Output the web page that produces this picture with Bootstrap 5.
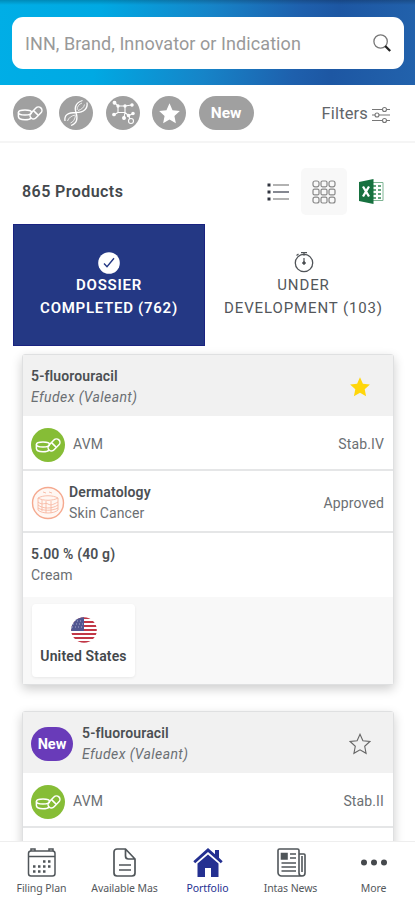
<!DOCTYPE html>
<html lang="en">
<head>
<meta charset="utf-8">
<meta name="viewport" content="width=device-width, initial-scale=1">
<title>Portfolio</title>
<link rel="stylesheet" href="https://cdn.jsdelivr.net/npm/bootstrap@5.3.0/dist/css/bootstrap.min.css">
<style>
body{font-family:Roboto,"Liberation Sans",sans-serif;font-size:14px;line-height:21px;color:#6b6f73;letter-spacing:.13px;background:#fff}
svg{display:block;flex:none}
.app{height:900px}
.top-bar{height:85px;padding:17px 11px 16px 12px;background:linear-gradient(#0003,#0000 5px),linear-gradient(97deg,#00aee6 0,#00a9e3 24%,#1684c8 50%,#1e60ad 71%,#1d57a3 80%,#2262ac 100%)}
.search-box{height:52px;border-radius:11px;padding:0 12px 0 13px;font-size:18px;color:#999;letter-spacing:.08px}
.chip-bar{height:58px;padding:2px 25px 2px 13px;border-bottom:2px solid #f5f5f5}
.chip{width:34px;height:34px;background:#a0a0a0;color:#fff;margin-right:12.4px}
.chip-new{width:55px;height:34px;border-radius:17px;background:#a0a0a0;font-size:15.5px;letter-spacing:0}
.filters{font-size:16.5px;color:#62666a;letter-spacing:.15px}
.tool-bar{height:47px;margin-top:25px;padding:0 31px 0 22px}
.total{font-size:16px;color:#44484c;letter-spacing:.43px}
.grid-btn{width:46px;height:47px;border-radius:5px;background:#f8f8f8;margin:0 12px}
.tabs-row{margin:9px 13px 0;height:122px}
.tab-cell{font-size:15px;line-height:23px;letter-spacing:.88px;padding-top:2px;color:#53575b}
.tab-on{flex:0 0 192px;background:#243884;border:1px solid #1a2380;color:#fff;font-weight:600;letter-spacing:.72px}
.product{width:372px;border:1px solid #dfe0e1;border-radius:3px;box-shadow:0 4px 11px #00000033;margin-left:22px}
.p-head{height:61px;background:#f1f1f1;padding:3px 22px 0 8px}
.p-name{font-weight:600;color:#4c5054}
.p-row{padding:4px 9px 0 8px;border-bottom:2px solid #e5e6e7}
.row-a{height:55px}.row-b{height:62px}
.row-c{height:64px;padding:0 8px}
.brand{font-style:italic;letter-spacing:.4px}
.pill{width:42px;height:34px;border-radius:17px;background:#693bb9;font-size:14.5px;letter-spacing:0;margin-right:9px}
.green{width:34px;height:34px;background:#86bd36;color:#fff;margin-right:8px}
.p-foot{height:87px;background:#f8f8f8;padding:7px 9px}
.country{width:103px;height:73px;border-radius:4px;box-shadow:0 1px 3px #0001;color:#44484c;font-weight:600;letter-spacing:.15px;padding-top:2px}
.country svg{margin-bottom:3px}
.feed{padding-top:8px}
.second{margin-top:26px;height:150px}
.bottom-nav{height:59px;border-top:1px solid #eee;background:#fff;font-family:"Noto Sans",sans-serif;font-size:10.5px;line-height:14px;color:#54585c;letter-spacing:-.08px;padding-top:5px}
.bottom-nav>div{width:83px}
.bottom-nav svg{margin-bottom:3px}
.bottom-nav .nav-on{color:#243091}
</style>
</head>
<body>
<svg width="0" height="0" class="position-absolute">
<defs>
<symbol id="pills" viewBox="0 0 34 34"><g fill="none" stroke="currentColor" stroke-width="1.5"><ellipse cx="12" cy="16.5" rx="6.6" ry="2.5"/><path d="M5.400 16.500v4c0 2 3 3.200 6.600 3.200 2.700 0 5.200-.7 6.200-1.800"/><rect x="16" y="13.400" width="14" height="7" rx="3.500" transform="rotate(-46 23 16.900)"/><path d="m20.500 14.600 4.600 4.500"/></g></symbol>
<symbol id="star" viewBox="0 0 22 22"><path d="m11 1.300 2.900 6.500 7 .7-5.200 4.800 1.400 7-6.100-3.500-6.100 3.500 1.400-7L1.100 8.500l7-.7z"/></symbol>
</defs>
</svg>
<div class="app d-flex flex-column overflow-hidden">
<header class="top-bar flex-shrink-0">
<div class="search-box bg-white d-flex align-items-center justify-content-between"><span>INN, Brand, Innovator or Indication</span>
<svg width="20" height="20" viewBox="0 0 20 20" fill="none"><circle cx="8.600" cy="8.500" r="6.700" stroke="#777" stroke-width="1.300"/><path d="m13.200 13 5 5" stroke="#222" stroke-width="2.300"/></svg></div>
</header>
<section class="chip-bar d-flex align-items-center flex-shrink-0">
<span class="chip rounded-circle"><svg width="34" height="34"><use href="#pills"/></svg></span>
<span class="chip rounded-circle"><svg width="34" height="34" viewBox="0 0 34 34" fill="none" stroke="#fff" stroke-width="1.300"><path d="M6 25c-1-6 3-8.500 11-8.500 8 0 12-4 11-10M12 29.500c6-2 7-7 5-13-2-5 0-10 6.500-12"/><path d="M8.500 25c1-3 4-5.500 8-6M11.500 27c3-1 4.500-4 5-7.500M18 14c0-4 2.500-6 5-7M19 14.500c3.500-1 6-3 6.500-6" stroke-width=".8"/></svg></span>
<span class="chip rounded-circle"><svg width="34" height="34" viewBox="0 0 34 34" fill="#fff" stroke="#fff" stroke-width="1.100"><path fill="none" d="M12 10h7v6.500h-7zM9 7l3 3M19 10l6.500-1M19 16.500l3.500 3 5-2M22.500 19.500l1.500 3.500M12 16.500l-3.500 2M19 16.500l-1 5"/><circle cx="8.500" cy="6.800" r="1.400"/><circle cx="26" cy="9" r="1.200"/><circle cx="12" cy="10" r="1.100"/><circle cx="19" cy="10" r="1.100"/><circle cx="8" cy="18.500" r="1.300"/><circle cx="18" cy="22" r="1.400"/><circle cx="27" cy="17.500" r="1.200"/><circle cx="22.500" cy="19.500" r="1.200"/><circle fill="none" cx="25" cy="25" r="2.500"/></svg></span>
<span class="chip rounded-circle d-flex align-items-center justify-content-center"><svg width="23" height="23" fill="currentColor"><use href="#star"/></svg></span>
<span class="chip-new text-white fw-bold d-flex align-items-center justify-content-center">New</span>
<span class="filters ms-auto d-flex align-items-center">Filters<svg class="ms-1 mt-1" width="18" height="18" viewBox="0 0 18 18" fill="#fff" stroke="#777" stroke-width="1.100"><path d="M0 3.500h18M0 9h18M0 14.500h18"/><circle cx="12.500" cy="3.500" r="2"/><circle cx="5" cy="9" r="2"/><circle cx="12.500" cy="14.500" r="2"/></svg></span>
</section>
<section class="tool-bar d-flex align-items-center flex-shrink-0">
<span class="total fw-semibold me-auto">865 Products</span>
<svg width="22" height="18" viewBox="0 0 22 18"><path d="M.5.500h3v3h-3zM.5 7.500h3v3h-3zM.5 14.500h3v3h-3z" fill="#30343f"/><path d="M6 2h16M6 16h16" stroke="#999" stroke-width="1.600"/><path d="M6 9h16" stroke="#5c606c" stroke-width="1.500"/></svg>
<span class="grid-btn d-flex align-items-center justify-content-center"><svg width="24" height="24" viewBox="0 0 24 24" fill="none" stroke="#888" stroke-width="1.200"><rect x="1" y="1" width="6" height="5.800" rx="2"/><rect x="9" y="1" width="6" height="5.800" rx="1.500"/><rect x="17" y="1" width="6" height="5.800" rx="2"/><rect x="1" y="9.100" width="6" height="5.800" rx="1.500"/><rect x="9" y="9.100" width="6" height="5.800" rx="1.500"/><rect x="17" y="9.100" width="6" height="5.800" rx="1.500"/><rect x="1" y="17.200" width="6" height="5.800" rx="2"/><rect x="9" y="17.200" width="6" height="5.800" rx="1.500"/><rect x="17" y="17.200" width="6" height="5.800" rx="2"/></svg></span>
<svg width="25" height="25" viewBox="0 0 25 25"><path d="M13 3.500h11v18H13" fill="#fff" stroke="#7fb594"/><path d="M14 7h3M14 11h3M14 15h3M14 19h3M19 7h3M19 11h3M19 15h3M19 19h3" stroke="#65a57e" stroke-width="2"/><path d="m0 3 14.500-3v25L0 22z" fill="#17713f"/><path d="m4 7.500 6 10M10 7.500l-6 10" stroke="#fff" stroke-width="2.300"/></svg>
</section>
<section class="tabs-row d-flex flex-shrink-0">
<div class="tab-cell tab-on d-flex flex-column align-items-center justify-content-center text-center"><svg width="22" height="22" viewBox="0 0 22 22"><circle cx="11" cy="10" r="10" fill="none"/><circle cx="11" cy="11" r="10.800" fill="#fff"/><path d="m6 11.500 3 3.200 7-8.400" fill="none" stroke="#243884" stroke-width="1.400"/></svg><span>DOSSIER<br>COMPLETED (762)</span></div>
<div class="tab-cell flex-fill d-flex flex-column align-items-center justify-content-center text-center"><svg width="22" height="22" viewBox="0 0 22 22" fill="none" stroke="#505458"><circle cx="11" cy="11" r="8.700" stroke-width="1.300"/><path d="M8 .7h6M11 .7v3M3.500 3.500l2-1.500M11 6v5" stroke-width="1.200"/><circle cx="11" cy="11" r="1.300" fill="#444"/></svg><span>UNDER<br>DEVELOPMENT (103)</span></div>
</section>
<main class="feed flex-fill overflow-hidden">
<article class="product bg-white">
<div class="p-head d-flex align-items-center justify-content-between"><div><div class="p-name">5-fluorouracil</div><div class="brand">Efudex (Valeant)</div></div><svg width="22" height="22" fill="#ffd60a"><use href="#star"/></svg></div>
<div class="p-row row-a d-flex align-items-center"><span class="green rounded-circle"><svg width="34" height="34"><use href="#pills"/></svg></span>AVM<span class="ms-auto">Stab.IV</span></div>
<div class="p-row row-b d-flex align-items-center"><svg class="me-1" width="34" height="34" viewBox="0 0 34 34" fill="none" stroke="#f7b8a3"><circle cx="17" cy="17" r="15.500" fill="#fff7f3" stroke="#f5a98f" stroke-width="1.400"/><path d="M7 12c5-3 15-3 20 0-5 3-15 3-20 0v12c4 4 16 4 20 0V12M7 16c5 4 7 0 10 2s6 0 10-2M7 19c5 4 14 4 20 0M7 22c5 3 14 3 20 0M20 15v12M11 14v11M15 15v12M12 6l3 1M18 6l3 1" stroke-width=".9"/></svg><div><div class="p-name">Dermatology</div><div>Skin Cancer</div></div><span class="ms-auto">Approved</span></div>
<div class="row-c d-flex flex-column justify-content-center"><div class="p-name">5.00 % (40 g)</div><div>Cream</div></div>
<div class="p-foot"><div class="country bg-white d-flex flex-column align-items-center justify-content-center"><svg width="26" height="26" viewBox="0 0 26 26"><clipPath id="disc"><circle cx="13" cy="13" r="12.800"/></clipPath><g clip-path="url(#disc)"><path fill="#fff" d="M0 0h26v26H0z"/><path d="M0 1h26M0 5h26M0 9h26M0 13h26M0 17h26M0 21h26M0 25h26" stroke="#c13746" stroke-width="2"/><path fill="#515691" d="M0 0h13v14H0z"/><path d="M3 4h9M2 7h10M1 10h11" stroke="#a8a9cb" stroke-dasharray="1 2"/></g></svg>United States</div></div>
</article>
<article class="product second bg-white">
<div class="p-head d-flex align-items-center"><span class="pill text-white fw-bold d-flex align-items-center justify-content-center">New</span><div><div class="p-name">5-fluorouracil</div><div class="brand">Efudex (Valeant)</div></div><svg class="ms-auto" width="22" height="22" fill="none" stroke="#666" stroke-width="1.100"><use href="#star"/></svg></div>
<div class="p-row row-a d-flex align-items-center"><span class="green rounded-circle"><svg width="34" height="34"><use href="#pills"/></svg></span>AVM<span class="ms-auto">Stab.II</span></div>
</article>
</main>
<nav class="bottom-nav d-flex flex-shrink-0 text-center">
<div class="d-flex flex-column align-items-center"><svg width="30" height="31" viewBox="0 0 30 31" fill="none" stroke="#50565a" stroke-width="1.500"><rect x="1.500" y="4" width="26.500" height="25" rx="2.500"/><path d="M2 9.500h26M4 4V2h4v2M22 4V2h4v2"/><path d="M16 14.500h8M6 19.500h18M6 24.500h13" stroke-width="2.500" stroke-dasharray="2.500 2.500"/></svg>Filing Plan</div>
<div class="d-flex flex-column align-items-center"><svg width="30" height="31" viewBox="0 0 30 31" fill="none" stroke="#50565a" stroke-width="1.700"><path d="M15.500 2H7a3 3 0 0 0-3 3v21a3 3 0 0 0 3 3h15a3 3 0 0 0 3-3V12zM15.500 2v7a3 3 0 0 0 3 3H25M9 18h12M9 23h12"/></svg>Available Mas</div>
<div class="nav-on d-flex flex-column align-items-center"><svg width="30" height="31" viewBox="0 0 30 31" fill="#243091"><path d="M15 1 .3 14.200l1.900 2L15 5l12.800 11.200 1.900-2-3.700-3.400V3h-4v4.300z"/><path d="M15 7.500 4.500 16.500V30H12v-9h6v9h7.500V16.500z"/></svg>Portfolio</div>
<div class="d-flex flex-column align-items-center"><svg width="30" height="31" viewBox="0 0 30 31" fill="none" stroke="#50565a" stroke-width="1.600"><path d="M23 26V3.500A1.500 1.500 0 0 0 21.500 2h-18A1.500 1.500 0 0 0 2 3.500v22A3.500 3.500 0 0 0 5.500 29H26a3 3 0 0 0 3-3V8a1 1 0 0 0-1-1h-5M23 26a3 3 0 0 0 3 3M26 9v16M14 7h6M14 11h6M5.500 16H20M5.500 20H20M5.500 24H20"/><path d="M5.500 6.500h5.500V12H5.500z" fill="#50565a"/></svg>Intas News</div>
<div class="d-flex flex-column align-items-center"><svg width="30" height="31" viewBox="0 0 30 31" fill="#45494d"><circle cx="5" cy="15.500" r="3"/><circle cx="15" cy="15.500" r="3"/><circle cx="25" cy="15.500" r="3"/></svg>More</div>
</nav>
</div>
<script src="https://cdn.jsdelivr.net/npm/bootstrap@5.3.0/dist/js/bootstrap.bundle.min.js"></script>
</body>
</html>
